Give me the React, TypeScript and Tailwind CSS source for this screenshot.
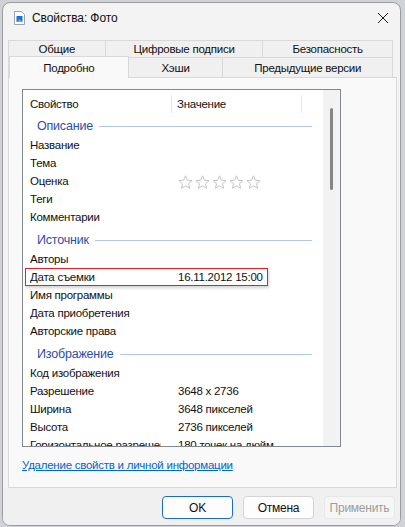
import React from "react";

type Row =
  | { group: string }
  | { name: string; value?: string; stars?: boolean; marked?: boolean };

const rows: Row[] = [
  { group: "Описание" },
  { name: "Название" },
  { name: "Тема" },
  { name: "Оценка", stars: true },
  { name: "Теги" },
  { name: "Комментарии" },
  { group: "Источник" },
  { name: "Авторы" },
  { name: "Дата съемки", value: "16.11.2012 15:00", marked: true },
  { name: "Имя программы" },
  { name: "Дата приобретения" },
  { name: "Авторские права" },
  { group: "Изображение" },
  { name: "Код изображения" },
  { name: "Разрешение", value: "3648 x 2736" },
  { name: "Ширина", value: "3648 пикселей" },
  { name: "Высота", value: "2736 пикселей" },
  { name: "Горизонтальное разрешение", value: "180 точек на дюйм" },
];

function FileIcon() {
  return (
    <svg width="11" height="14" viewBox="0 0 11 14">
      <path d="M0.5 0.5h7l3 3v10h-10z" fill="#fff" stroke="#9aa3ad" />
      <rect x="2.5" y="5" width="6" height="6" fill="#1f6fd1" />
      <path d="M2.5 11l3-3 3 3z" fill="#5fa8f0" />
    </svg>
  );
}

function CloseIcon() {
  return (
    <svg width="12" height="12" viewBox="0 0 12 12">
      <path d="M1 1l10 10M11 1L1 11" stroke="#1a1a1a" strokeWidth="1" />
    </svg>
  );
}

function Star() {
  return (
    <svg width="15" height="14" viewBox="0 0 15 14">
      <path
        d="M7.5 0.8l1.9 4.4 4.7 0.4-3.6 3.1 1.1 4.6-4.1-2.5-4.1 2.5 1.1-4.6-3.6-3.1 4.7-0.4z"
        fill="none"
        stroke="#c4c4c4"
        strokeWidth="1"
      />
    </svg>
  );
}

function Tab({ label, w, active }: { label: string; w: string; active?: boolean }) {
  return (
    <div
      className={
        active
          ? `${w} relative z-10 -mb-px h-[22px] -mt-px flex items-center justify-center border-x border-t border-[#d9d9d9] bg-[#f9f9f9]`
          : `${w} flex items-center justify-center border-r border-t border-[#d9d9d9] bg-[#f0f0f0]`
      }
    >
      {label}
    </div>
  );
}

function PropertyRow({ row }: { row: Row }) {
  if ("group" in row) {
    return (
      <div className="flex h-[24px] shrink-0 items-start pt-[5px] leading-[18px]">
        <span className="pl-[14px] text-[12.5px] tracking-[-0.2px] text-[#2b4fa6]">{row.group}</span>
        <div className="ml-[6px] mr-[11px] mt-[9px] h-px flex-1 bg-[#b4c6e6]" />
      </div>
    );
  }
  return (
    <div className="relative flex h-[18px] shrink-0 items-center leading-[18px]">
      <div className="w-[150px] shrink-0 pl-[7px] pr-[12px]">
        <div className="overflow-hidden whitespace-nowrap">{row.name}</div>
      </div>
      <div className="whitespace-nowrap pl-[5px]">
        {row.stars ? (
          <div className="flex gap-[2px] pt-[1px]">
            <Star />
            <Star />
            <Star />
            <Star />
            <Star />
          </div>
        ) : (
          row.value
        )}
      </div>
      {row.marked && (
        <div className="absolute left-[2px] top-0 h-[18px] w-[243px] border border-[#e2212b] shadow-[1px_2px_3px_rgba(0,0,0,0.18)]" />
      )}
    </div>
  );
}

export default function App() {
  return (
    <div className="h-[527px] w-[405px] overflow-hidden bg-[#cfd3d8] pl-[2px] pt-[2px] font-['Liberation_Sans',Arial,sans-serif] text-[11.5px] tracking-[-0.25px] text-[#111]">
      <div className="flex h-[524px] w-[399px] flex-col overflow-hidden rounded-[8px] border border-[#9c9c9c] bg-[#f3f3f3]">
        {/* title bar */}
        <div className="flex h-[28px] shrink-0 items-center pl-[11px] pr-[7px] pt-[1px]">
          <FileIcon />
          <span className="ml-[7px] text-[12px] tracking-[-0.1px]">Свойства: Фото</span>
          <div className="ml-auto flex h-[20px] w-[20px] items-center justify-center">
            <CloseIcon />
          </div>
        </div>

        {/* tabs */}
        <div className="ml-[5px] mt-[9px] flex w-[385px] shrink-0 flex-col">
          <div className="flex h-[17px] border-l border-[#d9d9d9] leading-[17px]">
            <Tab label="Общие" w="w-[97px]" />
            <Tab label="Цифровые подписи" w="w-[158px]" />
            <Tab label="Безопасность" w="w-[130px]" />
          </div>
          <div className="flex h-[20px] border-l border-[#d9d9d9] leading-[20px]">
            <Tab label="Подробно" w="w-[120px]" active />
            <Tab label="Хэши" w="w-[95px]" />
            <Tab label="Предыдущие версии" w="w-[170px]" />
          </div>
        </div>

        {/* tab page */}
        <div className="ml-[5px] flex h-[411px] w-[389px] shrink-0 flex-col border border-[#d9d9d9] bg-[#f9f9f9] pl-[13px] pt-[11px]">
          <div className="flex h-[358px] w-[319px] shrink-0 overflow-hidden border border-[#828790] bg-white">
            <div className="flex w-[300px] flex-col overflow-hidden">
              <div className="flex h-[22px] shrink-0 items-start pt-[5px] leading-[18px]">
                <div className="w-[149px] border-r border-[#e5e5e5] pl-[7px]">Свойство</div>
                <div className="w-[130px] border-r border-[#e5e5e5] pl-[5px]">Значение</div>
              </div>
              {rows.map((row, i) => (
                <PropertyRow key={i} row={row} />
              ))}
            </div>
            {/* scrollbar */}
            <div className="flex w-[17px] justify-center bg-[#f2f2f2] pt-[18px]">
              <div className="h-[82px] w-[3px] rounded-full bg-[#868686]" />
            </div>
          </div>
          <a className="mt-[9px] w-fit text-[#0066cc] underline leading-[18px]">
            Удаление свойств и личной информации
          </a>
        </div>

        {/* buttons */}
        <div className="flex flex-1 items-start justify-end gap-[10px] bg-[#f0f0f0] pr-[5px] pt-[8px] text-[12px]">
          <button className="h-[23px] w-[71px] rounded-[4px] border border-[#1b6cc4] bg-[#fdfdfd]">OK</button>
          <button className="h-[23px] w-[71px] rounded-[4px] border border-[#d4d4d4] bg-[#fdfdfd]">Отмена</button>
          <button className="h-[23px] w-[71px] rounded-[4px] border border-[#e6e6e6] bg-[#f6f6f6] text-[#9d9d9d]">
            Применить
          </button>
        </div>
      </div>
    </div>
  );
}
